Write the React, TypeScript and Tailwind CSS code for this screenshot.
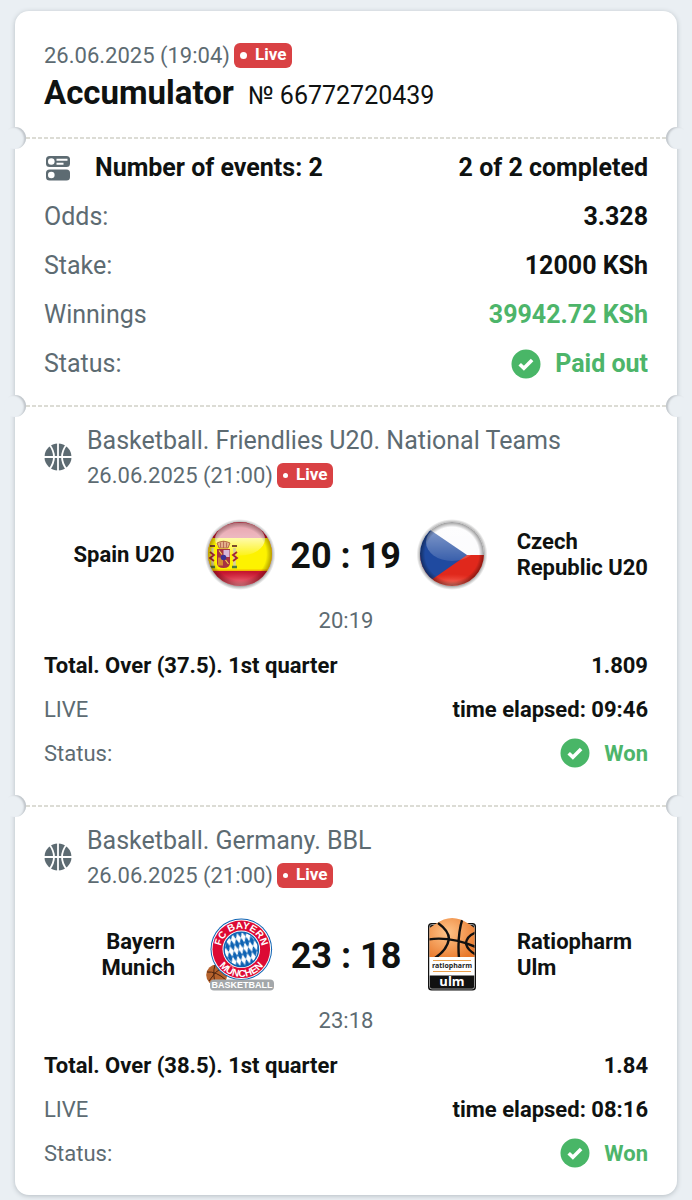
import React from 'react';

type Event = {
  league: string;
  date: string;
  home: string;
  away: string;
  homeLogo: React.ReactNode;
  awayLogo: React.ReactNode;
  score: string;
  subScore: string;
  market: string;
  odds: string;
  elapsed: string;
};

const LiveBadge: React.FC<{ big?: boolean }> = ({ big }) => (
  <span className="flex h-[25px] items-center gap-2 rounded-md bg-[#d94144] px-1.5 text-[17px] font-bold text-white">
    <span className={big ? 'h-[7px] w-[7px] rounded-full bg-white' : 'h-[5px] w-[5px] rounded-full bg-white'} />
    Live
  </span>
);

const CheckIcon: React.FC = () => (
  <svg viewBox="0 0 30 30" className="h-[30px] w-[30px] shrink-0" aria-hidden="true">
    <circle cx="15" cy="15" r="14.5" fill="#49b667" />
    <path d="M8.7 15.2l4.2 4.1 8.2-8.2" fill="none" stroke="#fff" strokeWidth="3.6" />
  </svg>
);

const EventsIcon: React.FC = () => (
  <svg viewBox="0 0 28 28" className="h-7 w-7 shrink-0" aria-hidden="true">
    <rect x="2" y="2" width="24" height="11" rx="3.5" fill="#5d6b72" />
    <rect x="2" y="15.5" width="24" height="11" rx="3.5" fill="#5d6b72" />
    <circle cx="7.3" cy="7.5" r="3.3" fill="#fff" />
    <circle cx="7.3" cy="21" r="3.3" fill="#fff" />
    <path d="M12.5 5.7h11M12.5 9.7h7" stroke="#fff" strokeWidth="1.9" />
  </svg>
);

const BasketballIcon: React.FC = () => (
  <svg viewBox="0 0 28 28" className="h-7 w-7 shrink-0" aria-hidden="true">
    <circle cx="14" cy="14" r="13.5" fill="#5d6b72" />
    <path
      d="M14 0v28M0 14h28M5 1Q15 14 5 27M23 1Q13 14 23 27"
      fill="none"
      stroke="#fff"
      strokeWidth="1.8"
    />
  </svg>
);

const SpainFlag: React.FC = () => (
  <svg viewBox="0 0 70 72" className="h-[72px] w-[70px] overflow-visible" role="img" aria-label="Spain">
    <defs>
      <clipPath id="es-clip"><circle cx="35" cy="35" r="32" /></clipPath>
      <radialGradient id="es-shade">
        <stop offset="0.82" stopColor="#000" stopOpacity="0" />
        <stop offset="1" stopColor="#300" stopOpacity="0.35" />
      </radialGradient>
      <radialGradient id="es-halo">
        <stop offset="0.88" stopColor="#555" stopOpacity="0.6" />
        <stop offset="1" stopColor="#777" stopOpacity="0" />
      </radialGradient>
      <linearGradient id="es-gloss" x1="0" y1="0" x2="0" y2="1">
        <stop offset="0" stopColor="#fff" stopOpacity="0.6" />
        <stop offset="0.45" stopColor="#fff" stopOpacity="0.7" />
        <stop offset="1" stopColor="#fff" stopOpacity="0.1" />
      </linearGradient>
      <radialGradient id="es-glow" cx="0.5" cy="1" r="0.6">
        <stop offset="0" stopColor="#ffa5ae" stopOpacity="0.95" />
        <stop offset="1" stopColor="#ff6070" stopOpacity="0" />
      </radialGradient>
    </defs>
    <circle cx="35" cy="35.5" r="35.5" fill="url(#es-halo)" />
    <g clipPath="url(#es-clip)">
      <rect width="70" height="72" fill="#c4152f" />
      <rect y="19" width="70" height="33" fill="#fdf200" />
      <rect y="50.5" width="70" height="1.5" fill="#f5b800" />
      <ellipse cx="35" cy="20" rx="25" ry="16.5" fill="url(#es-gloss)" />
      {/* coat of arms */}
      <g>
        <path d="M12 24q6.500-3.500 13 0l-2 5h-9z" fill="#e3b08a" stroke="#a8552f" strokeWidth="0.8" />
        <path d="M18.5 22v7M15.5 23.5v5M21.5 23.5v5" stroke="#b05a4a" strokeWidth="0.8" />
        <path d="M12 30h13v14q0 5-6.5 5T12 44z" fill="#a83240" />
        <rect x="18.5" y="31" width="6" height="7" fill="#d9b7d6" />
        <rect x="13" y="38.5" width="5" height="8" fill="#d58a32" />
        <circle cx="18.5" cy="38.5" r="2.8" fill="#3b3192" />
        <path d="M20.5 41l3 4M14 31.5l3 4" stroke="#f3d24b" strokeWidth="1.2" />
        <path d="M7.5 29v18M29.5 29v18" stroke="#d8cf9a" strokeWidth="2.6" />
        <path d="M5 33l4 3-4 3 4 3M32 33l-4 3 4 3-4 3" fill="none" stroke="#a3262f" strokeWidth="1.8" />
        <path d="M5 27h5M27 27h5" stroke="#7a4a2a" strokeWidth="2.2" />
        <path d="M5 48h5M27 48h5" stroke="#4f7a3a" strokeWidth="2.4" />
      </g>
      <rect y="42" width="70" height="26" fill="url(#es-glow)" />
      <circle cx="35" cy="35" r="32" fill="url(#es-shade)" />
    </g>
  </svg>
);

const CzechFlag: React.FC = () => (
  <svg viewBox="0 0 70 72" className="h-[72px] w-[70px] overflow-visible" role="img" aria-label="Czech Republic">
    <defs>
      <clipPath id="cz-clip"><circle cx="35" cy="35" r="32" /></clipPath>
      <radialGradient id="cz-shade">
        <stop offset="0.84" stopColor="#000" stopOpacity="0" />
        <stop offset="1" stopColor="#000" stopOpacity="0.4" />
      </radialGradient>
      <radialGradient id="cz-halo">
        <stop offset="0.88" stopColor="#555" stopOpacity="0.6" />
        <stop offset="1" stopColor="#777" stopOpacity="0" />
      </radialGradient>
      <linearGradient id="cz-gloss" x1="0" y1="0" x2="0" y2="1">
        <stop offset="0" stopColor="#fff" stopOpacity="0.5" />
        <stop offset="1" stopColor="#fff" stopOpacity="0.12" />
      </linearGradient>
      <radialGradient id="cz-glow" cx="0.5" cy="1" r="0.5">
        <stop offset="0" stopColor="#ff9a8a" stopOpacity="0.9" />
        <stop offset="1" stopColor="#ff6050" stopOpacity="0" />
      </radialGradient>
    </defs>
    <circle cx="35" cy="35.5" r="35.5" fill="url(#cz-halo)" />
    <g clipPath="url(#cz-clip)">
      <rect width="70" height="36" fill="#fbfbfd" />
      <rect y="36" width="70" height="36" fill="#e0281c" />
      <path d="M0 2L50 36 0 71z" fill="#1f4aa0" />
      <ellipse cx="35" cy="23" rx="26" ry="19" fill="url(#cz-gloss)" />
      <rect y="42" width="70" height="26" fill="url(#cz-glow)" />
      <circle cx="35" cy="35" r="32" fill="url(#cz-shade)" />
    </g>
  </svg>
);

const BayernLogo: React.FC = () => (
  <svg viewBox="0 0 70 72" className="h-[72px] w-[70px] overflow-visible" role="img" aria-label="FC Bayern">
    <defs>
      <pattern id="lozenge" width="5" height="11" patternUnits="userSpaceOnUse" patternTransform="translate(36 30) rotate(-14)">
        <rect width="5" height="11" fill="#fff" />
        <path d="M2.5 0L5 5.5 2.5 11 0 5.5z" fill="#0d62b3" />
      </pattern>
      <path id="ring-top" d="M15.8 30.3a20.5 20.5 0 0 1 41 0" />
      <path id="ring-bottom" d="M8.8 30.3a27.5 27.5 0 0 0 55 0" />
    </defs>
    <circle cx="11.7" cy="56" r="10.5" fill="#b5622c" />
    <path d="M2 53q9-1 19 8M10 46q-3 9 1 20M4 62q6-10 14-14" fill="none" stroke="#4d2410" strokeWidth="1" />
    <circle cx="36.3" cy="30.3" r="30.8" fill="#0d62b3" />
    <circle cx="36.3" cy="30.3" r="29.8" fill="#fff" />
    <circle cx="36.3" cy="30.3" r="28.8" fill="#dc0a34" />
    <circle cx="36.3" cy="30.3" r="18.8" fill="#fff" />
    <circle cx="36.3" cy="30.3" r="17.2" fill="url(#lozenge)" stroke="#0d62b3" strokeWidth="1.4" />
    <g fill="#fff" fontFamily="Liberation Sans, sans-serif" fontWeight="700" fontSize="10" textAnchor="middle">
      <text><textPath href="#ring-top" startOffset="50%">FC BAYERN</textPath></text>
      <text><textPath href="#ring-bottom" startOffset="50%">MÜNCHEN</textPath></text>
    </g>
    <rect x="5" y="60.5" width="64" height="11" rx="4" fill="#a3a7aa" />
    <text x="37" y="69" fill="#fff" fontFamily="Liberation Sans, sans-serif" fontWeight="700" fontSize="9" textAnchor="middle">
      BASKETBALL
    </text>
  </svg>
);

const UlmLogo: React.FC = () => (
  <svg viewBox="0 0 70 72" className="h-[72px] w-[70px] overflow-visible" role="img" aria-label="Ratiopharm Ulm">
    <defs>
      <clipPath id="ulm-clip"><path d="M12.5 38V9l6-4Q35-7 52 5l5.5 4v29z" /></clipPath>
      <radialGradient id="ulm-ball" cx="0.4" cy="0.4" r="0.7">
        <stop offset="0" stopColor="#ffc58a" />
        <stop offset="1" stopColor="#e8772a" />
      </radialGradient>
    </defs>
    <rect x="11" y="4" width="48" height="67.5" rx="3.5" fill="#111" />
    <rect x="12.5" y="5.5" width="45" height="64.5" rx="2.5" fill="none" stroke="#ccc" strokeWidth="0.7" />
    <g clipPath="url(#ulm-clip)">
      <rect x="11" y="-3" width="48" height="42" fill="url(#ulm-ball)" />
      <path
        d="M21 4Q32 12 32 20 30 31 18 39M11 20.5Q33 17 59 28M46-2Q40 16 42 39M60 13Q49 17 49 25 51 32 60 36"
        fill="none"
        stroke="#111"
        strokeWidth="2.4"
      />
    </g>
    <rect x="12.5" y="38" width="45" height="18.5" fill="#fff" />
    <path d="M16 41.5h38M16 52.5h38" stroke="#e9a04d" strokeWidth="1" />
    <text x="35" y="49" fill="#222" fontFamily="Open Sans, sans-serif" fontWeight="700" fontSize="7" textAnchor="middle">
      ratiopharm
    </text>
    <text x="35" y="67" fill="#fff" fontFamily="Open Sans, sans-serif" fontWeight="700" fontSize="13" textAnchor="middle">
      ulm
    </text>
  </svg>
);

/* Perforation with a half-round cut on either edge of the ticket */
const Divider: React.FC = () => (
  <div className="relative h-[2px] px-[11px]">
    <div className="h-full bg-[repeating-linear-gradient(90deg,#dcdcd5_0_4px,transparent_4px_6px)]" />
    <span className="absolute -left-[11px] -top-[10px] h-[22px] w-[22px] rounded-full bg-[#eaeff3] shadow-[inset_-3px_1px_2px_-1px_#c0c5ca]" />
    <span className="absolute -right-[11px] -top-[10px] h-[22px] w-[22px] rounded-full bg-[#eaeff3] shadow-[inset_3px_1px_2px_-1px_#c0c5ca]" />
  </div>
);

const EventSection: React.FC<{ event: Event }> = ({ event }) => (
  <section className="px-[29px] pt-4">
    <div className="flex items-center gap-[15px] text-[#5d6b72]">
      <BasketballIcon />
      <div>
        <h2 className="text-[25px] leading-[36px]">{event.league}</h2>
        <div className="flex h-8 items-center gap-1 text-[22px]">
          {event.date}
          <LiveBadge />
        </div>
      </div>
    </div>

    <div className="mt-7 flex items-center text-[22px] font-bold leading-[26px]">
      <div className="mr-[30px] flex-1 whitespace-pre text-right">{event.home}</div>
      {event.homeLogo}
      <div className="w-[142px] pt-[2px] text-center text-[36px]">{event.score}</div>
      {event.awayLogo}
      <div className="ml-[30px] flex-1 whitespace-pre">{event.away}</div>
    </div>
    <div className="mt-4 text-center text-[22px] leading-[28px] text-[#5d6b72]">{event.subScore}</div>

    <div className="mt-2 text-[22px]">
      <div className="flex h-11 items-center justify-between font-bold">
        <span>{event.market}</span>
        <span>{event.odds}</span>
      </div>
      <div className="flex h-11 items-center justify-between">
        <span className="text-[#5d6b72]">LIVE</span>
        <span className="font-bold">time elapsed: {event.elapsed}</span>
      </div>
      <div className="flex h-11 items-center justify-between">
        <span className="text-[#5d6b72]">Status:</span>
        <span className="flex items-center gap-[14px] font-bold text-[#4db56a]">
          <CheckIcon />
          Won
        </span>
      </div>
    </div>
  </section>
);

const events: Event[] = [
  {
    league: 'Basketball. Friendlies U20. National Teams',
    date: '26.06.2025 (21:00)',
    home: 'Spain U20',
    away: 'Czech\nRepublic U20',
    homeLogo: <SpainFlag />,
    awayLogo: <CzechFlag />,
    score: '20 : 19',
    subScore: '20:19',
    market: 'Total. Over (37.5). 1st quarter',
    odds: '1.809',
    elapsed: '09:46',
  },
  {
    league: 'Basketball. Germany. BBL',
    date: '26.06.2025 (21:00)',
    home: 'Bayern\nMunich',
    away: 'Ratiopharm\nUlm',
    homeLogo: <BayernLogo />,
    awayLogo: <UlmLogo />,
    score: '23 : 18',
    subScore: '23:18',
    market: 'Total. Over (38.5). 1st quarter',
    odds: '1.84',
    elapsed: '08:16',
  },
];

const App: React.FC = () => {
  return (
    <div className="min-h-screen bg-[#eaeff3] px-[15px] pb-[5px] pt-[11px] font-['Roboto',sans-serif] text-[#0f1211]">
      <main className="rounded-[14px] bg-white shadow-[0_1px_5px_#b4bcc2]">
        <header className="px-[29px] pb-6 pt-[30px]">
          <div className="flex h-7 items-center gap-1 text-[22px] text-[#5d6b72]">
            26.06.2025 (19:04)
            <LiveBadge big />
          </div>
          <div className="mt-1 flex h-10 items-baseline gap-[14px] leading-10">
            <h1 className="text-[33px] font-bold">Accumulator</h1>
            <span className="text-[25px]">№ 66772720439</span>
          </div>
        </header>

        <Divider />

        <section className="px-[29px] pb-[17px] pt-1 text-[25px]">
          <div className="flex h-[49px] items-center justify-between font-bold">
            <span className="flex items-center gap-[23px]">
              <EventsIcon />
              Number of events: 2
            </span>
            <span>2 of 2 completed</span>
          </div>
          <div className="flex h-[49px] items-center justify-between">
            <span className="text-[#5d6b72]">Odds:</span>
            <span className="font-bold">3.328</span>
          </div>
          <div className="flex h-[49px] items-center justify-between">
            <span className="text-[#5d6b72]">Stake:</span>
            <span className="font-bold">12000 KSh</span>
          </div>
          <div className="flex h-[49px] items-center justify-between">
            <span className="text-[#5d6b72]">Winnings</span>
            <span className="font-bold text-[#4db56a]">39942.72 KSh</span>
          </div>
          <div className="flex h-[49px] items-center justify-between">
            <span className="text-[#5d6b72]">Status:</span>
            <span className="flex items-center gap-[14px] font-bold text-[#4db56a]">
              <CheckIcon />
              Paid out
            </span>
          </div>
        </section>

        <Divider />
        <div className="pb-[30px]">
          <EventSection event={events[0]} />
        </div>
        <Divider />
        <div className="pb-5">
          <EventSection event={events[1]} />
        </div>
      </main>
    </div>
  );
};

export default App;
